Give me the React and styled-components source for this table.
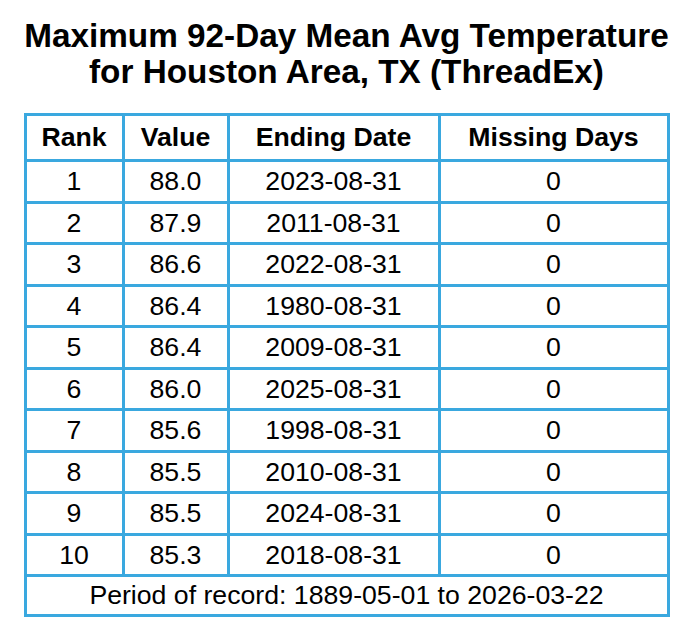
import React from 'react';
import styled, { createGlobalStyle } from 'styled-components';

const GlobalStyle = createGlobalStyle`
  html, body {
    margin: 0;
    padding: 0;
    background: #ffffff;
  }
  body {
    font-family: "Liberation Sans", Arial, sans-serif;
    color: #000000;
  }
`;

const Page = styled.div`
  width: 693px;
  display: flex;
  flex-direction: column;
  align-items: center;
  padding-top: 18px;
`;

const Title = styled.h2`
  margin: 0 0 23px 0;
  font-size: 33.3px;
  font-weight: 700;
  line-height: 36px;
  text-align: center;
  white-space: nowrap;
`;

const Table = styled.table`
  width: 646px;
  border-collapse: collapse;
  border: 3px solid #3aa8df;
  font-size: 26.67px;
  table-layout: fixed;
`;

const HeadCell = styled.th`
  width: ${(p) => p.$w}px;
  border: 3px solid #3aa8df;
  padding: 6px 0;
  line-height: 31px;
  font-weight: 700;
  text-align: center;
`;

const Cell = styled.td`
  border: 3px solid #3aa8df;
  padding: 4px 0;
  line-height: 30.5px;
  text-align: center;
`;

const FooterCell = styled.td`
  border: 3px solid #3aa8df;
  padding: 3px 0;
  line-height: 31px;
  text-align: center;
`;

const rows = [
  [1, '88.0', '2023-08-31', 0],
  [2, '87.9', '2011-08-31', 0],
  [3, '86.6', '2022-08-31', 0],
  [4, '86.4', '1980-08-31', 0],
  [5, '86.4', '2009-08-31', 0],
  [6, '86.0', '2025-08-31', 0],
  [7, '85.6', '1998-08-31', 0],
  [8, '85.5', '2010-08-31', 0],
  [9, '85.5', '2024-08-31', 0],
  [10, '85.3', '2018-08-31', 0],
];

function App() {
  return (
    <>
      <GlobalStyle />
      <Page>
        <Title>
          Maximum 92-Day Mean Avg Temperature
          <br />
          for Houston Area, TX (ThreadEx)
        </Title>
        <Table>
          <thead>
            <tr>
              <HeadCell $w={95}>Rank</HeadCell>
              <HeadCell $w={102}>Value</HeadCell>
              <HeadCell $w={208}>Ending Date</HeadCell>
              <HeadCell $w={226}>Missing Days</HeadCell>
            </tr>
          </thead>
          <tbody>
            {rows.map((r) => (
              <tr key={r[0]}>
                <Cell>{r[0]}</Cell>
                <Cell>{r[1]}</Cell>
                <Cell>{r[2]}</Cell>
                <Cell>{r[3]}</Cell>
              </tr>
            ))}
            <tr>
              <FooterCell colSpan={4}>Period of record: 1889-05-01 to 2026-03-22</FooterCell>
            </tr>
          </tbody>
        </Table>
      </Page>
    </>
  );
}

export default App;
